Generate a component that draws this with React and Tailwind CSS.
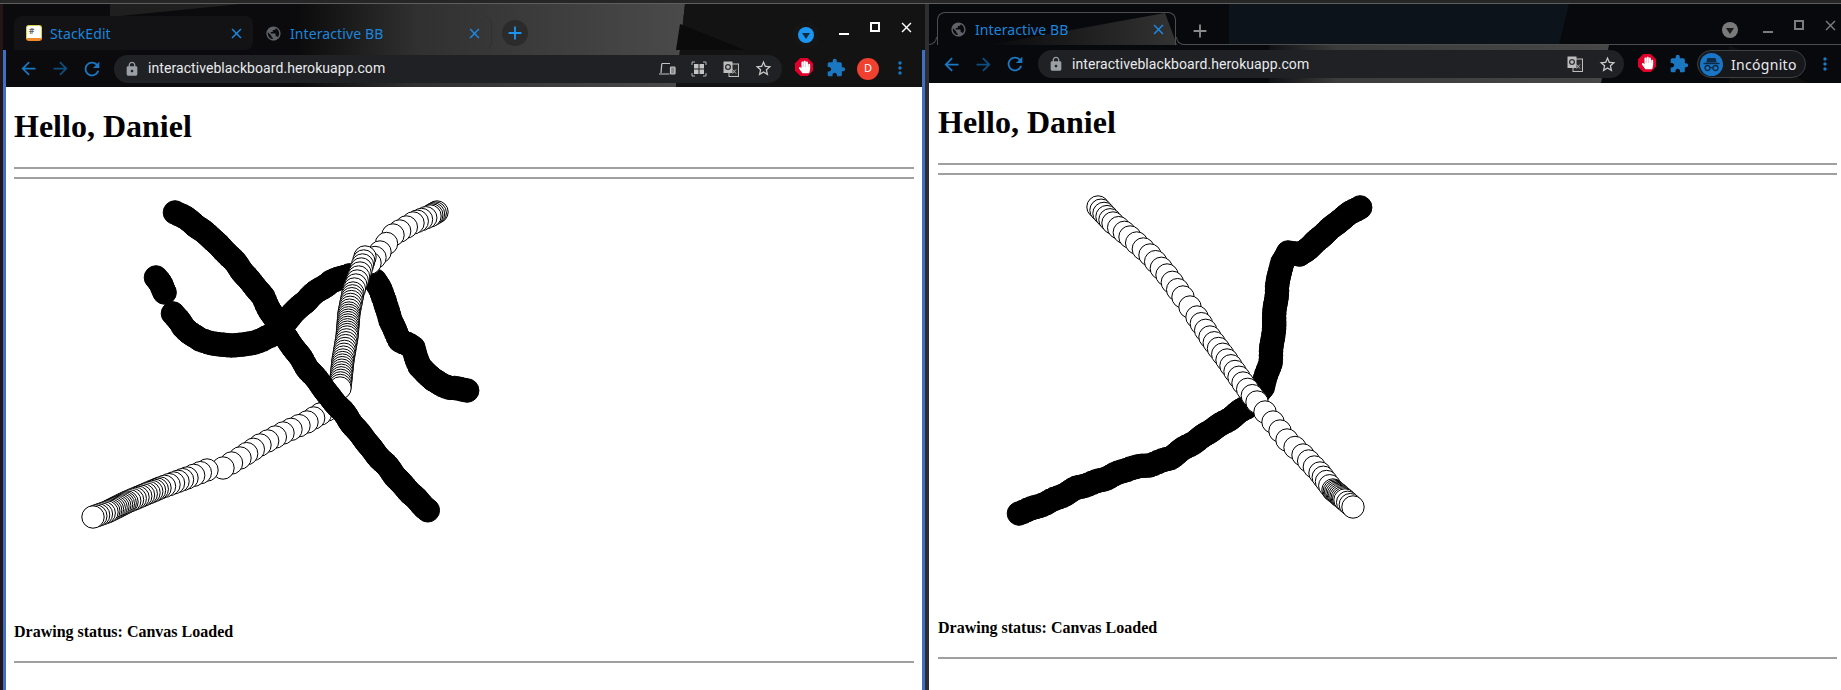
import { FaHandPaper } from "react-icons/fa";
import {
  MdAdd,
  MdArrowBack,
  MdArrowForward,
  MdClose,
  MdExtension,
  MdLock,
  MdMoreVert,
  MdPublic,
  MdRefresh,
  MdStarBorder,
} from "react-icons/md";

// stroke paths, in page coordinates. third value = circle spacing for the segment
const leftStrokes = [
  { color: "black", pts: [[156, 277], [165, 292, 3]] },
  {
    color: "black",
    pts: [[173, 313], [183, 327], [200, 340], [220, 345], [243, 345], [263, 340], [280, 330], [293, 313], [310, 297], [330, 282], [350, 275]],
  },
  {
    color: "black",
    pts: [[375, 280], [385, 300], [390, 320], [400, 340], [413, 348], [420, 367], [433, 380], [450, 388], [467, 390]],
  },
  {
    color: "white",
    pts: [[437, 212], [430, 216, 2], [413, 223, 5], [393, 235, 8], [380, 252, 9], [370, 263, 9]],
  },
  {
    color: "white",
    pts: [[365, 257], [360, 273, 4], [353, 293, 4], [349, 313, 3], [347, 337, 2.5], [343, 360, 3], [340, 388, 2.5]],
  },
  {
    color: "white",
    pts: [[327, 410], [307, 422, 9], [283, 433, 9], [260, 445, 9], [240, 458, 9], [223, 468, 10], [207, 470, 16], [187, 478, 7], [160, 488, 5], [127, 502, 3], [107, 512, 2], [93, 517, 3]],
  },
  {
    color: "black",
    pts: [[175, 212], [193, 223], [210, 237], [227, 253], [247, 277], [263, 297], [277, 323], [290, 343], [307, 367], [327, 393], [347, 417], [367, 443], [390, 470], [410, 493], [428, 510]],
  },
];

const rightStrokes = [
  {
    color: "black",
    pts: [[1019, 513], [1047, 503], [1077, 488], [1107, 478], [1130, 468], [1150, 465], [1170, 458], [1197, 440], [1223, 423], [1247, 407], [1263, 387], [1270, 363], [1273, 337], [1275, 310], [1277, 287], [1282, 263], [1288, 252], [1300, 255], [1320, 238], [1340, 220], [1360, 207]],
  },
  {
    color: "white",
    pts: [[1098, 207], [1113, 223, 4], [1130, 237, 8], [1150, 255, 9], [1167, 275, 8], [1183, 297, 9], [1197, 317, 10], [1210, 337, 9], [1227, 360, 7], [1243, 383, 7], [1257, 402, 9], [1273, 422, 11], [1287, 440, 13], [1303, 455, 11], [1320, 473, 9], [1333, 490, 5], [1345, 500, 1.8], [1353, 507, 4]],
  },
];

function samplePath(pts, defaultStep) {
  const out = [[pts[0][0], pts[0][1]]];
  for (let i = 1; i < pts.length; i++) {
    const [x0, y0] = pts[i - 1];
    const [x1, y1, step] = pts[i];
    const len = Math.hypot(x1 - x0, y1 - y0);
    const n = Math.max(1, Math.round(len / (step || defaultStep)));
    for (let k = 1; k <= n; k++) {
      out.push([x0 + ((x1 - x0) * k) / n, y0 + ((y1 - y0) * k) / n]);
    }
  }
  return out;
}

function Drawing({ strokes, viewBox }) {
  return (
    <svg width="900" height="444" viewBox={viewBox} className="block">
      {strokes.map((stroke, i) => (
        <g key={i} fill={stroke.color} stroke="black" strokeWidth="1">
          {samplePath(stroke.pts, 4).map(([x, y], k) => (
            // hand drawn line: black ones wobble a little
            <circle
              key={k}
              cx={stroke.color === "black" ? x + Math.sin(k * 0.7) * 0.5 : x}
              cy={stroke.color === "black" ? y + Math.cos(k * 1.1) * 0.5 : y}
              r={stroke.color === "black" ? 11.8 : 11.2}
            />
          ))}
        </g>
      ))}
    </svg>
  );
}

function Page({ viewBox, strokes, className }) {
  return (
    <div className={`flex-1 bg-white font-['Liberation_Serif',serif] text-black ${className}`}>
      <h1 className="mt-[21px] mb-[22px] text-[32px] font-bold leading-[37px]">Hello, Daniel</h1>
      <div className="h-[2px] bg-[#a0a0a0]" />
      <div className="mt-2 h-[2px] bg-[#a0a0a0]" />
      <Drawing strokes={strokes} viewBox={viewBox} />
      <p className="text-base font-bold leading-[18px]">Drawing status: Canvas Loaded</p>
      <div className="mt-5 h-[2px] bg-[#a0a0a0]" />
    </div>
  );
}

function StackEditIcon() {
  return (
    <div className="flex h-4 w-4 flex-none rounded-[3px] border border-b-[3px] border-[#d9d24c] border-b-[#f08a2c] bg-white pl-[2px] text-[8px] font-bold leading-[9px] text-[#666]">
      #
    </div>
  );
}

function Tab({ icon, title, className }) {
  return (
    <div className={`flex w-[239px] flex-none items-center pl-3 pr-2 ${className}`}>
      {icon}
      <span className="ml-2 flex-1 text-[14px] tracking-[0.1px] text-[#1b86dc]">{title}</span>
      <MdClose size={17} className="flex-none text-[#1b8ae6]" />
    </div>
  );
}

function NavButtons({ dim }) {
  return (
    <>
      <div className="flex w-8 justify-center">
        <MdArrowBack size={21} className="text-[#1a78c2]" />
      </div>
      <div className="flex w-8 justify-center">
        <MdArrowForward size={21} className={dim} />
      </div>
      <div className="flex w-8 justify-center">
        <MdRefresh size={22} className="text-[#1a78c2]" />
      </div>
    </>
  );
}

function DevicesIcon() {
  return (
    <svg width="17" height="14" viewBox="0 0 17 14" fill="none" stroke="#c4c4c4" strokeWidth="1.2">
      <path d="M3 1.5h8M2.8 1.5 2 11M0 12h10.5" />
      <rect x="11.5" y="5" width="4.5" height="7" rx="0.8" fill="#888" />
    </svg>
  );
}

function QrIcon() {
  return (
    <svg width="16" height="16" viewBox="0 0 16 16" fill="none">
      <path d="M1 4V1h3M12 1h3v3M15 12v3h-3M4 15H1v-3" stroke="#b5b5b5" strokeWidth="1" />
      <rect x="3" y="3" width="4.5" height="4.5" fill="#c4c4c4" />
      <rect x="8.5" y="3" width="4.5" height="4.5" fill="#c4c4c4" />
      <rect x="3" y="8.5" width="4.5" height="4.5" fill="#c4c4c4" />
      <rect x="8.5" y="8.5" width="4.5" height="4.5" fill="#c4c4c4" />
    </svg>
  );
}

function TranslateIcon() {
  return (
    <svg width="16" height="16" viewBox="0 0 16 16" fill="none">
      <rect x="6" y="3" width="9.5" height="12.5" fill="#2a2a2a" stroke="#bdbdbd" strokeWidth="1" />
      <rect x="0.5" y="0.5" width="9" height="11.5" fill="#bdbdbd" />
      <circle cx="5" cy="6" r="2.4" fill="none" stroke="#333" strokeWidth="1.3" />
      <path d="M9.5 8.5l3.5 4M13 8.5l-3.5 4" stroke="#bdbdbd" strokeWidth="0.9" />
    </svg>
  );
}

function StopIcon() {
  return (
    <div className="flex w-8 justify-center">
      <svg width="18" height="18" viewBox="0 0 18 18">
        <polygon points="5.3,0 12.7,0 18,5.3 18,12.7 12.7,18 5.3,18 0,12.7 0,5.3" fill="#e0002b" />
        <FaHandPaper x="3" y="2.5" size={13} color="white" />
      </svg>
    </div>
  );
}

function ToolbarIcon({ children }) {
  return <div className="flex w-8 justify-center">{children}</div>;
}

function IncognitoAvatar() {
  return (
    <div className="flex h-[23px] w-[23px] flex-none items-center justify-center rounded-full bg-[#1976c6]">
      <svg width="17" height="15" viewBox="0 0 17 15" fill="none">
        <path d="M4.5 1h8l1.3 4.5H3.2z" fill="#0e2a44" />
        <rect x="0.5" y="5.8" width="16" height="1.4" fill="#0e2a44" />
        <circle cx="4.5" cy="11" r="2.5" stroke="#0e2a44" strokeWidth="1.3" />
        <circle cx="12.5" cy="11" r="2.5" stroke="#0e2a44" strokeWidth="1.3" />
        <path d="M7 10.6h3" stroke="#0e2a44" strokeWidth="1.2" />
      </svg>
    </div>
  );
}

function DropdownCircle({ fill, arrow }) {
  return (
    <div className={`flex h-4 w-4 items-center justify-center rounded-full ${fill}`}>
      <div className={`mt-[2px] h-0 w-0 border-x-[4.5px] border-t-[6px] border-x-transparent ${arrow}`} />
    </div>
  );
}

function WindowControls({ color, border, line }) {
  return (
    <div className={`flex h-3 items-center gap-5 ${color}`}>
      <div className="flex h-3 w-3 items-end justify-center">
        <div className={`mb-[-2px] h-[2px] w-[10px] ${line}`} />
      </div>
      <div className={`h-[10px] w-[10px] border-2 ${border}`} />
      <MdClose size={17} className="-mx-[2.5px]" />
    </div>
  );
}

function WindowOne() {
  return (
    <div className="flex w-[925px] flex-none flex-col">
      <header className="relative h-[83px] flex-none bg-[#0b0b0d]">
        <svg className="absolute inset-0 h-full w-full">
          <defs>
            <linearGradient id="themeOne" x1="0" x2="1" y1="0" y2="0">
              <stop offset="0" stopColor="#0c0c0c" />
              <stop offset="0.3" stopColor="#303030" />
              <stop offset="1" stopColor="#4a4a4a" />
            </linearGradient>
          </defs>
          <polygon points="110,0 241,0 110,13" fill="#1f1f1f" />
          <polygon points="300,0 685,0 676,83 300,83" fill="url(#themeOne)" />
          <polygon points="685,0 925,0 925,83 676,83" fill="#131313" />
          <polygon points="680,20 745,46 676,46" fill="#0b0b0b" />
        </svg>
        <div className="absolute bottom-0 left-0 top-0 w-[3px] bg-[#241616]" />
        <div className="absolute bottom-0 left-[3px] top-[46px] w-[3px] bg-[#3f6fc4]" />
        <div className="absolute bottom-0 right-0 top-[46px] w-[3px] bg-[#3f6fc4]" />
        <div className="relative flex h-[46px] pl-[14px]">
          <Tab
            icon={<StackEditIcon />}
            title="StackEdit"
            className="mt-3 rounded-t-lg rounded-br-lg bg-[#131315]"
          />
          <Tab
            icon={<MdPublic size={17} className="flex-none text-[#5f6368]" />}
            title="Interactive BB"
            className="mt-3 rounded-r-lg border-r border-[#303030]"
          />
          <div className="ml-[10px] mt-[16px] flex h-[26px] w-[26px] items-center justify-center rounded-full bg-[#2b2b2b]">
            <MdAdd size={22} className="text-[#1b95f0]" />
          </div>
          <div className="ml-auto mr-[13px] mt-[17px] flex items-start">
            <div className="mr-[18px] flex h-7 w-7 items-center justify-center rounded-full bg-[#151515]">
              <DropdownCircle fill="bg-[#1b95f0]" arrow="border-t-[#0c2a40]" />
            </div>
            <WindowControls color="text-white" border="border-white" line="bg-white" />
          </div>
        </div>
        <div className="relative flex h-[37px] items-center pl-3 pr-[9px]">
          <NavButtons dim="text-[#0f4f7f]" />
          <div className="ml-[6px] flex h-7 flex-1 items-center rounded-full bg-[#202124] pl-[10px] pr-[3px]">
            <MdLock size={16} className="flex-none text-[#9aa0a6]" />
            <span className="ml-2 flex-1 font-['Roboto',sans-serif] text-[14px] tracking-[0.07px] text-[#e8eaed]">
              interactiveblackboard.herokuapp.com
            </span>
            <ToolbarIcon>
              <DevicesIcon />
            </ToolbarIcon>
            <ToolbarIcon>
              <QrIcon />
            </ToolbarIcon>
            <ToolbarIcon>
              <TranslateIcon />
            </ToolbarIcon>
            <ToolbarIcon>
              <MdStarBorder size={19} className="text-[#c8c8c8]" />
            </ToolbarIcon>
          </div>
          <div className="ml-[6px] flex">
            <StopIcon />
            <ToolbarIcon>
              <MdExtension size={20} className="text-[#1a78c2]" />
            </ToolbarIcon>
            <ToolbarIcon>
              <div className="flex h-[22px] w-[22px] items-center justify-center rounded-full bg-[#f0402f] text-[11px] text-white">
                D
              </div>
            </ToolbarIcon>
            <ToolbarIcon>
              <MdMoreVert size={20} className="text-[#1a78c2]" />
            </ToolbarIcon>
          </div>
        </div>
      </header>
      <div className="ml-[3px] flex flex-1 border-x-[3px] border-[#3f6fc4] shadow-[-3px_0_0_#241616]">
        <Page strokes={leftStrokes} viewBox="14 179 900 444" className="px-2" />
      </div>
    </div>
  );
}

function WindowTwo() {
  return (
    <div className="flex min-w-0 flex-1 flex-col">
      <header className="relative h-[79px] flex-none bg-[#07090d]">
        <svg className="absolute inset-0 h-full w-full">
          <defs>
            <linearGradient id="themeTab" x1="0" x2="1" y1="0" y2="0">
              <stop offset="0" stopColor="#0a0a0c" />
              <stop offset="1" stopColor="#333333" />
            </linearGradient>
            <linearGradient id="themeBar" x1="0" x2="1" y1="0" y2="0">
              <stop offset="0" stopColor="#101114" />
              <stop offset="0.2" stopColor="#3c3c3c" />
              <stop offset="1" stopColor="#464646" />
            </linearGradient>
          </defs>
          <polygon points="300,0 640,0 630,41 300,41" fill="#0d131a" />
          <polygon points="60,41 236,9 248,41" fill="url(#themeTab)" />
          <polygon points="340,41 680,41 672,79 340,79" fill="url(#themeBar)" />
          <polygon points="800,41 880,79 800,79" fill="#101010" />
        </svg>
        <div className="relative flex h-[41px]">
          <div className="h-2 w-2 flex-none self-end rounded-br-lg border-b border-r border-[#4d4d4d]" />
          <Tab
            icon={<MdPublic size={17} className="flex-none text-[#5f6368]" />}
            title="Interactive BB"
            className="mt-2 rounded-t-lg border border-b-0 border-[#4d4d4d]"
          />
          <div className="h-2 w-2 flex-none self-end rounded-bl-lg border-b border-l border-[#4d4d4d]" />
          <div className="flex flex-1 border-b border-[#4d4d4d] pt-2">
            <MdAdd size={22} className="ml-[5px] mt-[8px] text-[#8a8a8a]" />
            <div className="ml-auto mr-[5px] mt-[7px] flex items-start">
              <div className="mr-[24px] mt-[3px]">
                <DropdownCircle fill="bg-[#7a7a7a]" arrow="border-t-[#1a1a1a]" />
              </div>
              <WindowControls color="text-[#7c7c7c]" border="border-[#7c7c7c]" line="bg-[#7c7c7c]" />
            </div>
          </div>
        </div>
        <div className="relative flex h-[38px] items-center pl-[6px]">
          <NavButtons dim="text-[#0f4f7f]" />
          <div className="ml-[7px] flex h-7 flex-1 items-center rounded-full bg-[#202124] pl-[10px] pr-px">
            <MdLock size={16} className="flex-none text-[#9aa0a6]" />
            <span className="ml-2 flex-1 font-['Roboto',sans-serif] text-[14px] tracking-[0.07px] text-[#e8eaed]">
              interactiveblackboard.herokuapp.com
            </span>
            <ToolbarIcon>
              <TranslateIcon />
            </ToolbarIcon>
            <ToolbarIcon>
              <MdStarBorder size={19} className="text-[#c8c8c8]" />
            </ToolbarIcon>
          </div>
          <div className="ml-[7px] flex">
            <StopIcon />
            <ToolbarIcon>
              <MdExtension size={20} className="text-[#1a78c2]" />
            </ToolbarIcon>
          </div>
          <div className="ml-[2px] flex h-7 w-[109px] flex-none items-center rounded-full border border-[#3c4043] bg-[#17181b] pl-[2px]">
            <IncognitoAvatar />
            <span className="ml-[8px] text-[14px] tracking-[0.3px] text-[#e8eaed]">Incógnito</span>
          </div>
          <div className="ml-[3px] flex w-8 justify-center">
            <MdMoreVert size={20} className="text-[#1a78c2]" />
          </div>
        </div>
      </header>
      <Page strokes={rightStrokes} viewBox="938 175 900 444" className="pl-[9px] pr-[4px]" />
    </div>
  );
}

export default function App() {
  return (
    <div className="flex h-[690px] w-[1841px] flex-col overflow-hidden bg-[#0b0b0b] font-['Noto_Sans',sans-serif]">
      <div className="h-[4px] flex-none border-b border-[#5e5e5e] bg-[#262626]" />
      <div className="flex min-h-0 flex-1">
        <WindowOne />
        <div className="w-[4px] flex-none bg-[#2e2e2e]" />
        <WindowTwo />
      </div>
    </div>
  );
}
